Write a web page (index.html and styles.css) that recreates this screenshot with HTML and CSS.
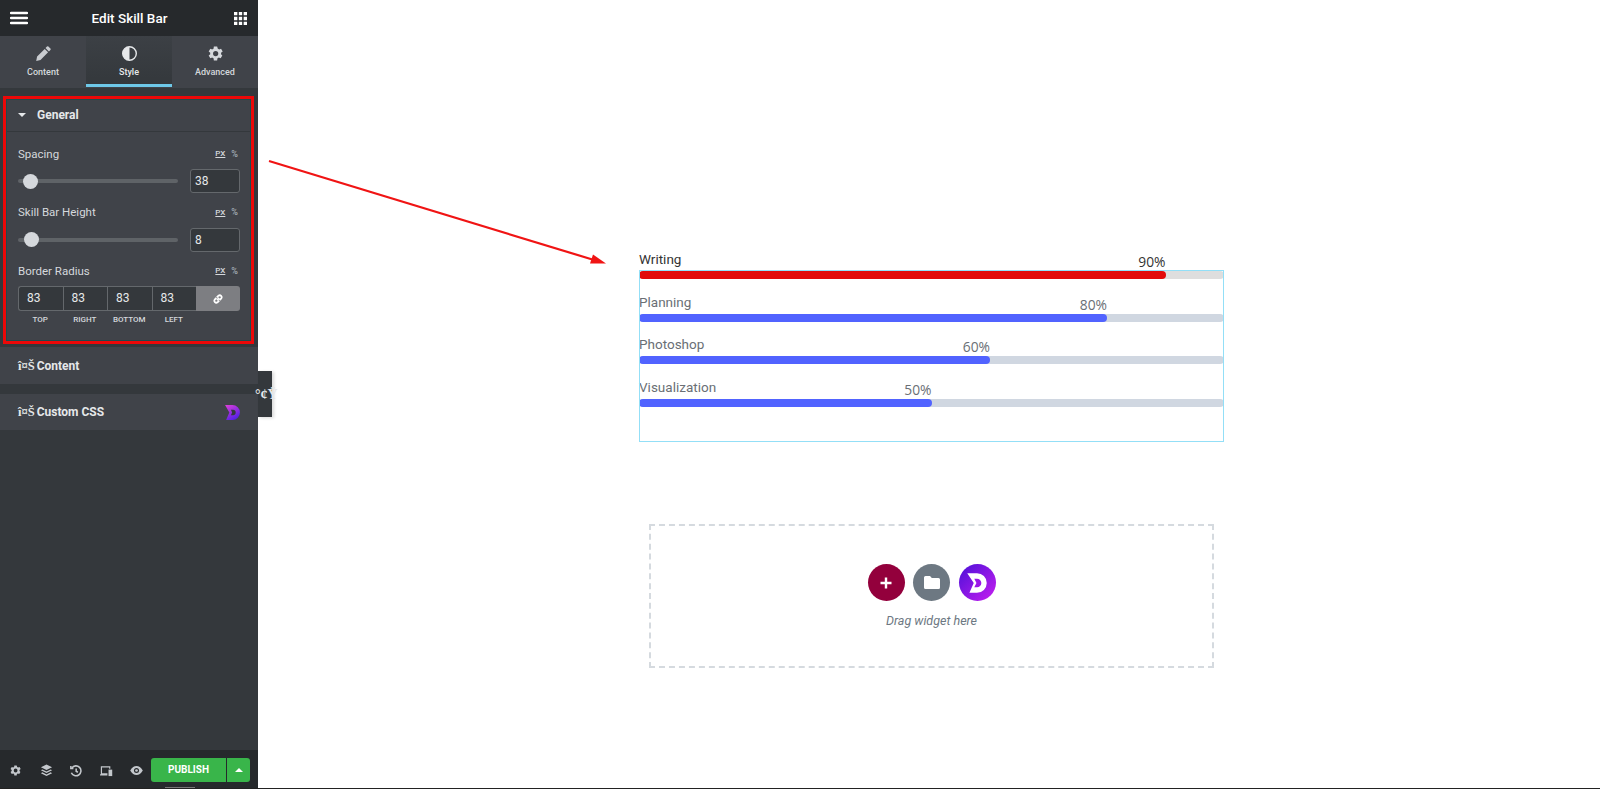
FILE: index.html
```html
<!DOCTYPE html>
<html lang="en">
<head>
    <meta charset="UTF-8">
    <meta name="viewport" content="width=device-width, initial-scale=1.0">
    <title>Edit Skill Bar</title>
    <link rel="stylesheet" href="styles.css">
</head>
<body>
    <div class="page">
        <aside class="sidebar">
            <header class="top-bar">
                <svg class="top-icon" width="18" height="14" viewBox="0 0 18 14"><path d="M1 2h16M1 7h16M1 12h16" stroke="#fff" stroke-width="2.4" stroke-linecap="round"/></svg>
                <span class="top-title">Edit Skill Bar</span>
                <svg class="top-icon" width="13" height="13" viewBox="0 0 14 14" fill="#fff"><path d="M0 0h3.6v3.6H0zM5.2 0h3.6v3.6H5.2zM10.4 0H14v3.6h-3.6zM0 5.2h3.6v3.6H0zM5.2 5.2h3.6v3.6H5.2zM10.4 5.2H14v3.6h-3.6zM0 10.4h3.6V14H0zM5.2 10.4h3.6V14H5.2zM10.4 10.4H14V14h-3.6z"/></svg>
            </header>

            <nav class="tabs">
                <div class="tab">
                    <svg width="15" height="15" viewBox="0 0 15 15" fill="#c9ccd0"><path d="M11 .6a1 1 0 0 1 1.400 0l2 2a1 1 0 0 1 0 1.400l-1.500 1.500-3.400-3.400zM8.700 2.900l3.400 3.400-7.600 7.600-4.300 1 .9-4.400z"/></svg>
                    <span>Content</span>
                </div>
                <div class="tab tab-active">
                    <svg width="15" height="15" viewBox="0 0 15 15"><circle cx="7.500" cy="7.500" r="6.800" fill="none" stroke="#e6e8ea" stroke-width="1.400"/><path d="M7.500 .7a6.800 6.800 0 0 0 0 13.600z" fill="#e6e8ea"/></svg>
                    <span>Style</span>
                </div>
                <div class="tab">
                    <svg width="15" height="15" viewBox="2 2 20 20" fill="#d5d8dc"><path d="M19.400 13a7.500 7.500 0 0 0 0-2l2.200-1.700-2.200-3.700-2.600 1a7.500 7.500 0 0 0-1.700-1L14.200 2.800H9.800l-.4 2.800a7.500 7.500 0 0 0-1.700 1l-2.600-1-2.200 3.700L5 11a7.500 7.500 0 0 0 0 2l-2.100 1.700 2.200 3.700 2.600-1a7.500 7.500 0 0 0 1.700 1l.4 2.800h4.400l.4-2.800a7.500 7.500 0 0 0 1.700-1l2.600 1 2.200-3.700zM12.200 15.500a3.500 3.500 0 1 1 0-7 3.500 3.500 0 0 1 0 7z"/></svg>
                    <span>Advanced</span>
                </div>
            </nav>

            <section class="general">
                <div class="section-head">
                    <span class="caret"></span>
                    <span class="section-title">General</span>
                </div>
                <div class="controls">
                    <div class="control">
                        <div class="control-label"><span>Spacing</span><span class="units"><u>PX</u><i>%</i></span></div>
                        <div class="slider-row">
                            <div class="slider"><span class="knob knob-a"></span></div>
                            <div class="num-input">38</div>
                        </div>
                    </div>
                    <div class="control">
                        <div class="control-label"><span>Skill Bar Height</span><span class="units"><u>PX</u><i>%</i></span></div>
                        <div class="slider-row">
                            <div class="slider"><span class="knob knob-b"></span></div>
                            <div class="num-input">8</div>
                        </div>
                    </div>
                    <div class="control control-last">
                        <div class="control-label"><span>Border Radius</span><span class="units"><u>PX</u><i>%</i></span></div>
                        <div class="dimensions">
                            <div class="dim-box">83</div>
                            <div class="dim-box">83</div>
                            <div class="dim-box">83</div>
                            <div class="dim-box">83</div>
                            <div class="dim-link">
                                <svg width="12" height="12" viewBox="0 0 12 12" fill="none" stroke="#fff" stroke-width="1.800"><path d="M5 7.200 7.200 5M4.400 4.800 2.700 6.500a2 2 0 0 0 2.800 2.800L7.200 7.600M7.600 7.200l1.700-1.700a2 2 0 0 0-2.800-2.800L4.800 4.400"/></svg>
                            </div>
                        </div>
                        <div class="dim-labels">
                            <span>TOP</span><span>RIGHT</span><span>BOTTOM</span><span>LEFT</span><span></span>
                        </div>
                    </div>
                </div>
            </section>

            <div class="panel panel-content"><span><span class="broken">î¤Š</span> Content</span></div>
            <div class="panel panel-css">
                <span><span class="broken">î¤Š</span> Custom CSS</span>
                <svg width="17" height="17" viewBox="0 0 16 16"><defs><linearGradient id="proGrad" x1="0" y1="0" x2="0.600" y2="1"><stop offset="0" stop-color="#e040d8"/><stop offset="1" stop-color="#5420e4"/></linearGradient></defs><path d="M1 1h7a7 7 0 0 1 0 14H2l3-7z" fill="url(#proGrad)"/><path d="M6.500 5.500h2a2.500 2.500 0 0 1 0 5h-2l1.200-2.500z" fill="#34383c"/></svg>
            </div>

            <footer class="bottom-bar">
                <div class="bottom-icons">
                    <svg width="13" height="13" viewBox="0 0 24 24" fill="#c3c7cc"><path d="M19.400 13a7.500 7.500 0 0 0 0-2l2.200-1.700-2.200-3.700-2.600 1a7.500 7.500 0 0 0-1.700-1L14.200 2.800H9.800l-.4 2.800a7.500 7.500 0 0 0-1.700 1l-2.600-1-2.200 3.700L5 11a7.500 7.500 0 0 0 0 2l-2.100 1.700 2.200 3.700 2.600-1a7.500 7.500 0 0 0 1.700 1l.4 2.800h4.400l.4-2.800a7.500 7.500 0 0 0 1.700-1l2.600 1 2.200-3.700zM12.200 15.500a3.500 3.500 0 1 1 0-7 3.500 3.500 0 0 1 0 7z"/></svg>
                    <svg width="13" height="13" viewBox="0 0 14 14" fill="#c3c7cc"><path d="M7 .5 13 3.500 7 6.500 1 3.500zM2.500 5.800 7 8 11.500 5.800 13 6.700 7 9.700 1 6.700zM2.500 9 7 11.200 11.500 9 13 9.900 7 12.900 1 9.900z"/></svg>
                    <svg width="12" height="12" viewBox="0 0 14 14" fill="none" stroke="#c3c7cc" stroke-width="1.800"><path d="M2.200 3.500A5.800 5.800 0 1 1 1.600 9"/><path d="M1 1.200v3h3" /><path d="M7.200 4v3.300l2 1.200"/></svg>
                    <svg width="13" height="12" viewBox="0 0 14 13" fill="none" stroke="#c3c7cc" stroke-width="1.300"><path d="M8 9.500H1.500V2h9v2M0 10.800h8"/><rect x="9.200" y="5" width="4" height="7" fill="#c3c7cc" stroke="none"/></svg>
                    <svg width="13" height="9" viewBox="0 0 14 10"><path d="M0 5c2-3.400 4.400-5 7-5s5 1.600 7 5c-2 3.400-4.400 5-7 5S2 8.400 0 5z" fill="#c3c7cc"/><circle cx="7" cy="5" r="2.800" fill="#26292c"/><circle cx="7" cy="5" r="1.500" fill="#c3c7cc"/></svg>
                </div>
                <div class="publish">
                    <span class="publish-main">PUBLISH</span>
                    <span class="publish-more"><span class="caret-up"></span></span>
                </div>
            </footer>
            <span class="footer-notch"></span>

            <div class="collapse-tab"><span>°¢Ÿ</span></div>
        </aside>

        <main class="canvas">
            <svg class="arrow" width="352" height="120" viewBox="0 0 352 120">
                <path d="M11 11 L336 110" stroke="#f01414" stroke-width="2.200" fill="none"/>
                <path d="M348 113.500 L332 113.500 L335 104.500 z" fill="#f01414"/>
            </svg>

            <div class="skills-wrap">
                <div class="skill">
                    <div class="skill-head skill-dark"><span class="skill-name">Writing</span><span class="skill-pct" style="left: 90%">90%</span></div>
                    <div class="track track-red"><div class="fill fill-red" style="width: 90%"></div></div>
                </div>
                <div class="skill">
                    <div class="skill-head"><span class="skill-name">Planning</span><span class="skill-pct" style="left: 80%">80%</span></div>
                    <div class="track"><div class="fill" style="width: 80%"></div></div>
                </div>
                <div class="skill">
                    <div class="skill-head"><span class="skill-name">Photoshop</span><span class="skill-pct" style="left: 60%">60%</span></div>
                    <div class="track"><div class="fill" style="width: 60%"></div></div>
                </div>
                <div class="skill">
                    <div class="skill-head"><span class="skill-name">Visualization</span><span class="skill-pct" style="left: 50%">50%</span></div>
                    <div class="track"><div class="fill" style="width: 50%"></div></div>
                </div>
                <div class="skills-outline"></div>
            </div>

            <div class="dropzone">
                <div class="drop-buttons">
                    <span class="drop-btn drop-add">
                        <svg width="14" height="14" viewBox="0 0 14 14"><path d="M7 1.500v11M1.500 7h11" stroke="#fff" stroke-width="2.400"/></svg>
                    </span>
                    <span class="drop-btn drop-folder">
                        <svg width="16" height="13" viewBox="0 0 16 13" fill="#fff"><path d="M1.500 0H6l1.800 2h6.700A1.500 1.500 0 0 1 16 3.500v8a1.500 1.500 0 0 1-1.500 1.500h-13A1.500 1.500 0 0 1 0 11.500v-10A1.500 1.500 0 0 1 1.500 0z"/></svg>
                    </span>
                    <span class="drop-btn drop-logo">
                        <svg width="26" height="26" viewBox="0 0 24 24"><path d="M3 3h9a9 9 0 0 1 0 18H5l4-9z" fill="#fff"/><path d="M9.500 8h2.500a4 4 0 0 1 0 8H9.500l2-4z" fill="#9a17e8"/></svg>
                    </span>
                </div>
                <p class="drop-text">Drag widget here</p>
            </div>
        </main>
    </div>
</body>
</html>
```

FILE: styles.css
```css
* {
    box-sizing: border-box;
}

body {
    margin: 0;
    font-family: Roboto, Arial, sans-serif;
    background-color: #fff;
}

.page {
    display: flex;
    height: 789px;
    overflow: hidden;
    border-bottom: 1px solid #222;
}

/* sidebar */
.sidebar {
    position: relative;
    display: flex;
    flex-direction: column;
    width: 258px;
    flex-shrink: 0;
    background-color: #34383c;
    color: #e6e8ea;
}

.top-bar {
    display: flex;
    justify-content: space-between;
    align-items: center;
    height: 36px;
    padding: 0 11px 0 10px;
    background-color: #26292c;
}

.top-title {
    margin-right: 3px;
    color: #fff;
    font-size: 13.500px;
    font-weight: 500;
}

.tabs {
    display: flex;
    height: 52px;
    background-color: #404349;
}

.tab {
    flex: 1;
    display: flex;
    flex-direction: column;
    align-items: center;
    gap: 6px;
    padding-top: 10px;
    font-size: 9px;
    font-weight: 500;
    color: #d5d8dc;
}

.tab-active {
    color: #e6e8ea;
    background-color: #34383c;
    border-bottom: 3px solid #6ec8e8;
    height: 51px;
    background-image: linear-gradient(#3c4045, #34383c);
}

.general {
    margin: 8px 4px 3px 3px;
    border: 3px solid #ec0808;
    outline: 1px solid #1f4a4c;
    outline-offset: -4px;
    background-color: #404349;
    height: 248px;
}

.section-head {
    display: flex;
    align-items: center;
    height: 33px;
    padding-left: 12px;
    border-bottom: 1px solid #34383c;
}

.caret {
    width: 0;
    height: 0;
    border-left: 4px solid transparent;
    border-right: 4px solid transparent;
    border-top: 4px solid #e6e8ea;
    margin-right: 11px;
}

.section-title {
    font-size: 12px;
    font-weight: 700;
}

.controls {
    padding: 15px 11px 0 12px;
}

.control {
    margin-bottom: 12.500px;
}

.control-label {
    display: flex;
    justify-content: space-between;
    align-items: center;
    height: 13px;
    font-size: 11.500px;
    color: #d5d8dc;
}

.units {
    display: flex;
    gap: 6px;
    align-items: center;
    padding-right: 2px;
    font-size: 8px;
    font-weight: 500;
}

.units i {
    font-style: normal;
    font-size: 9px;
    color: #a4afb7;
}

.slider-row {
    display: flex;
    justify-content: space-between;
    align-items: center;
    margin-top: 9px;
}

.slider {
    position: relative;
    width: 160px;
    height: 4px;
    border-radius: 3px;
    background-color: #5f6367;
}

.knob {
    position: absolute;
    top: -5.500px;
    width: 15px;
    height: 15px;
    border-radius: 50%;
    background-color: #d5d8dc;
}

.knob-a {
    left: 4.500px;
}

.knob-b {
    left: 5.500px;
}

.num-input {
    width: 50px;
    height: 24px;
    padding-left: 4px;
    line-height: 22px;
    font-size: 12px;
    color: #e6e8ea;
    background-color: #34383c;
    border: 1px solid #64686c;
    border-radius: 3px;
}

.dimensions {
    display: flex;
    height: 25px;
    margin-top: 9px;
}

.dim-box {
    flex: 0 0 44.500px;
    padding-left: 8px;
    line-height: 23px;
    font-size: 12px;
    color: #e6e8ea;
    background-color: #34383c;
    border: 1px solid #64686c;
    border-right-width: 0;
}

.dim-box:first-child {
    border-radius: 3px 0 0 3px;
}

.dim-link {
    flex: 1;
    display: flex;
    justify-content: center;
    align-items: center;
    background-color: #7d7e82;
    border-radius: 0 3px 3px 0;
}

.dim-labels {
    display: flex;
    margin-top: 4px;
    font-size: 8px;
    font-weight: 500;
    color: #d5d8dc;
}

.dim-labels span {
    flex: 0 0 44.500px;
    text-align: center;
}

.panel {
    display: flex;
    align-items: center;
    padding: 0 18px;
    font-size: 12px;
    font-weight: 700;
    color: #e6e8ea;
    background-color: #404349;
}

.panel-content {
    height: 37px;
    padding-top: 1px;
}

.panel-css {
    justify-content: space-between;
    height: 36px;
    margin-top: 10px;
    padding-right: 17px;
}

.broken {
    font-family: "Liberation Serif", serif;
    font-weight: 700;
    font-size: 12.500px;
    margin-right: -1px;
    white-space: pre;
}

.bottom-bar {
    display: flex;
    justify-content: space-between;
    align-items: center;
    height: 38px;
    margin-top: auto;
    padding: 2px 8px 0 9px;
    background-color: #26292c;
}

.bottom-icons {
    display: flex;
    align-items: center;
    gap: 17.500px;
    padding-top: 1px;
}

.publish {
    display: flex;
    width: 99px;
    height: 24px;
    border-radius: 3px;
    overflow: hidden;
    background-color: #39b54a;
    color: #fff;
    font-size: 10px;
    font-weight: 700;
}

.publish-main {
    flex: 1;
    text-align: center;
    line-height: 24px;
}

.publish-more {
    display: flex;
    justify-content: center;
    align-items: center;
    width: 24px;
    border-left: 1px solid #26292c;
}

.caret-up {
    width: 0;
    height: 0;
    border-left: 4px solid transparent;
    border-right: 4px solid transparent;
    border-bottom: 4px solid #fff;
}

.footer-notch {
    position: absolute;
    left: 165px;
    bottom: 0;
    width: 30px;
    height: 1px;
    background-color: #777;
}

.collapse-tab {
    position: absolute;
    left: 258px;
    top: 371px;
    width: 14px;
    height: 46px;
    display: flex;
    align-items: center;
    background-color: #34383c;
    box-shadow: 2px 1px 3px rgba(0, 0, 0, 0.15);
}

.collapse-tab span {
    margin-left: -3px;
    padding-top: 2px;
    color: #e6e8ea;
    font-family: "Liberation Serif", serif;
    font-size: 14px;
    font-weight: 700;
    white-space: pre;
}

/* preview area */
.canvas {
    position: relative;
    flex: 1;
    padding: 251px 0 0 381px;
}

.arrow {
    position: absolute;
    left: 0;
    top: 150px;
}

.skills-wrap {
    position: relative;
    width: 585px;
    height: 191px;
}

.skill {
    height: 42.600px;
}

.skill-head {
    position: relative;
    height: 20px;
    font-size: 13.500px;
    line-height: 17px;
    color: #6a6f75;
}

.skill-dark {
    color: #333;
}

.skill-pct {
    position: absolute;
    top: 2px;
    transform: translateX(-100%);
    font-family: "Open Sans", sans-serif;
    font-size: 13.800px;
}

.track {
    height: 8px;
    border-radius: 8px;
    background-color: #d0d7e1;
}

.track-red {
    background-color: #dedede;
}

.fill {
    height: 100%;
    border-radius: 8px;
    background-color: #5163ff;
}

.fill-red {
    background-color: #e20a0a;
}

.skills-outline {
    position: absolute;
    left: 0;
    top: 19px;
    right: 0;
    bottom: 0;
    border: 1px solid #93dff7;
    pointer-events: none;
}

.dropzone {
    display: flex;
    flex-direction: column;
    align-items: center;
    width: 565px;
    height: 144px;
    margin: 82px 0 0 10px;
    padding-top: 38px;
    border: 2px dashed #d5dadf;
}

.drop-buttons {
    display: flex;
    gap: 8.500px;
}

.drop-btn {
    display: flex;
    justify-content: center;
    align-items: center;
    width: 37px;
    height: 37px;
    border-radius: 50%;
}

.drop-add {
    background-color: #93003c;
}

.drop-folder {
    background-color: #6d7882;
}

.drop-logo {
    background: linear-gradient(135deg, #4a10d8, #c81ff0);
}

.drop-text {
    margin: 12px 0 0;
    font-size: 12.500px;
    font-style: italic;
    color: #6d7882;
}
```
